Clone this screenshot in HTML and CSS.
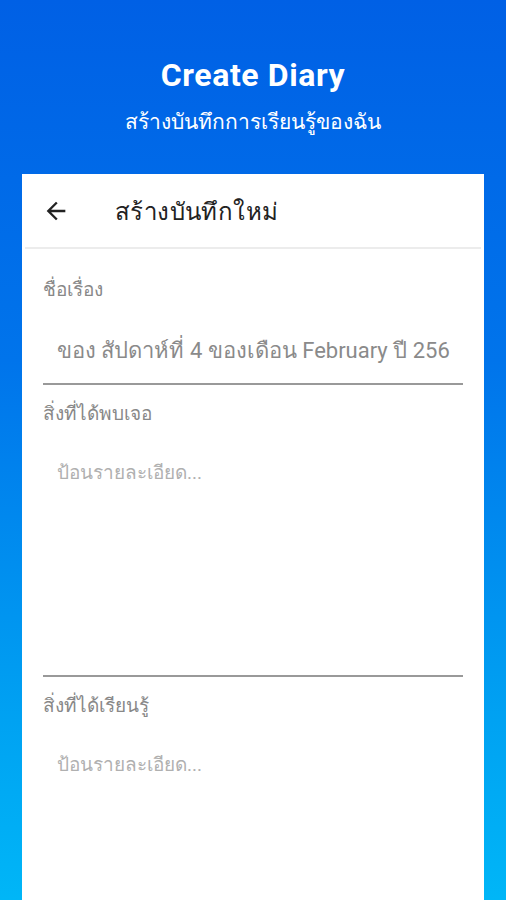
FILE: index.html
```html
<!DOCTYPE html>
<html lang="th">
<head>
    <meta charset="UTF-8">
    <meta name="viewport" content="width=device-width, initial-scale=1.0">
    <title>Create Diary</title>
    <link rel="stylesheet" href="styles.css">
</head>
<body>
    <div class="hero">
        <h1>Create Diary</h1>
        <p class="subtitle">สร้างบันทึกการเรียนรู้ของฉัน</p>
    </div>

    <div class="card">
        <div class="card-header">
            <span class="back">
                <svg width="28" height="28" viewBox="0 0 24 24"><path d="M20 11H7.83l5.59-5.59L12 4l-8 8 8 8 1.41-1.41L7.83 13H20v-2z" fill="#222"/></svg>
            </span>
            <span class="card-title">สร้างบันทึกใหม่</span>
        </div>

        <div class="form">
            <div class="field">
                <label>ชื่อเรื่อง</label>
                <div class="input single">ของ สัปดาห์ที่ 4 ของเดือน February ปี 256</div>
            </div>
            <div class="field">
                <label>สิ่งที่ได้พบเจอ</label>
                <div class="input multi placeholder">ป้อนรายละเอียด...</div>
            </div>
            <div class="field">
                <label>สิ่งที่ได้เรียนรู้</label>
                <div class="input multi placeholder">ป้อนรายละเอียด...</div>
            </div>
        </div>
    </div>
</body>
</html>
```

FILE: styles.css
```css
html, body {
    margin: 0;
    padding: 0;
    height: 900px;
    overflow: hidden;
}
body {
    font-family: Roboto, "Noto Sans", sans-serif;
    background: linear-gradient(to bottom, #0060e5 0%, #0074eb 40%, #00a2f2 80%, #00b6f7 100%);
}
.hero {
    color: white;
    text-align: center;
    padding-top: 56px;
    height: 118px;
}
.hero h1 {
    margin: 0;
    font-size: 32px;
    font-weight: 700;
    line-height: 38px;
    letter-spacing: 0.6px;
}
.subtitle {
    margin: 14px 0 0;
    font-size: 21px;
    line-height: 28px;
}
.card {
    background: white;
    margin: 0 22px;
    height: 726px;
    overflow: hidden;
}
.card-header {
    display: flex;
    align-items: center;
    height: 73px;
    border-bottom: 2px solid #ececec;
    margin: 0 3px;
}
.back {
    display: flex;
    margin-left: 17px;
}
.card-title {
    margin-left: 45px;
    font-size: 24px;
    letter-spacing: 0.4px;
    color: #222;
    padding-top: 2px;
}
.form {
    padding: 0 21px;
}
.field {
    border-bottom: 2px solid #999;
}
.field:last-child {
    border-bottom: none;
}
.field label {
    display: block;
    color: #888;
    font-size: 19px;
    line-height: 24px;
    padding-top: 17px;
}
.field:first-child label {
    padding-top: 29px;
}
.input {
    color: #8a8a8a;
    font-size: 22px;
    line-height: 28px;
    padding: 35px 14px 0;
    white-space: nowrap;
    overflow: hidden;
}
.single {
    height: 46px;
}
.multi {
    padding-top: 33px;
    height: 216px;
}
.placeholder {
    color: #b0b0b0;
    font-size: 19px;
}
```
